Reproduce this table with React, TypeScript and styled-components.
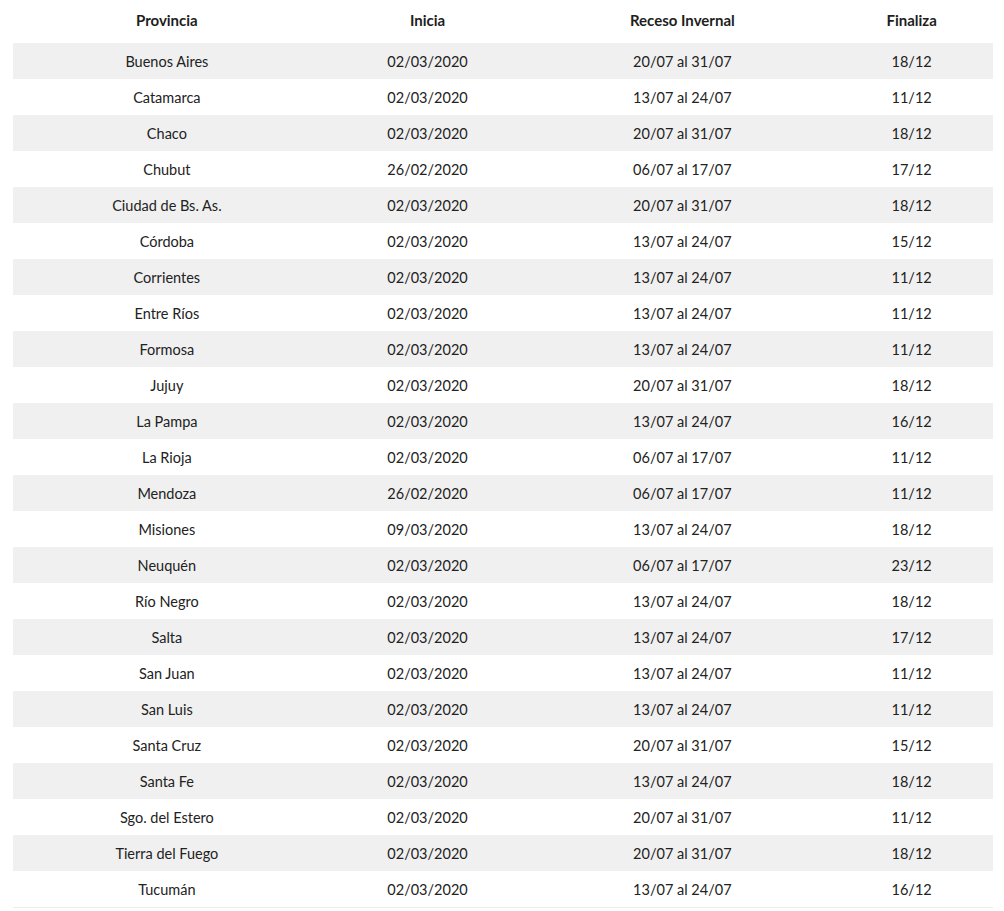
import React from 'react'
import styled, { createGlobalStyle } from 'styled-components'

const GlobalStyle = createGlobalStyle`
  body {
    margin: 0;
    background: #fff;
    font-family: Lato, 'Noto Sans', sans-serif;
    color: #222;
  }
`

const Wrapper = styled.div`
  padding: 0 11px 0 13px;
`

const Table = styled.table`
  width: 100%;
  border-collapse: collapse;
  table-layout: fixed;
  border-bottom: 1px solid #ececec;
`

const HeadCell = styled.th<{ $w: string }>`
  width: ${({ $w }) => $w};
  height: 39px;
  padding: 0 0 4px;
  font-size: 15px;
  font-weight: 700;
  text-align: center;
  vertical-align: middle;
  color: #1e1e1e;
`

const Row = styled.tr<{ $striped: boolean }>`
  background: ${({ $striped }) => ($striped ? '#f0f0f0' : '#fff')};
`

const Cell = styled.td`
  height: 36px;
  padding: 0;
  font-size: 14.5px;
  text-align: center;
  vertical-align: middle;
  color: #222;
`

const rows: [string, string, string, string][] = [
  ['Buenos Aires', '02/03/2020', '20/07 al 31/07', '18/12'],
  ['Catamarca', '02/03/2020', '13/07 al 24/07', '11/12'],
  ['Chaco', '02/03/2020', '20/07 al 31/07', '18/12'],
  ['Chubut', '26/02/2020', '06/07 al 17/07', '17/12'],
  ['Ciudad de Bs. As.', '02/03/2020', '20/07 al 31/07', '18/12'],
  ['Córdoba', '02/03/2020', '13/07 al 24/07', '15/12'],
  ['Corrientes', '02/03/2020', '13/07 al 24/07', '11/12'],
  ['Entre Ríos', '02/03/2020', '13/07 al 24/07', '11/12'],
  ['Formosa', '02/03/2020', '13/07 al 24/07', '11/12'],
  ['Jujuy', '02/03/2020', '20/07 al 31/07', '18/12'],
  ['La Pampa', '02/03/2020', '13/07 al 24/07', '16/12'],
  ['La Rioja', '02/03/2020', '06/07 al 17/07', '11/12'],
  ['Mendoza', '26/02/2020', '06/07 al 17/07', '11/12'],
  ['Misiones', '09/03/2020', '13/07 al 24/07', '18/12'],
  ['Neuquén', '02/03/2020', '06/07 al 17/07', '23/12'],
  ['Río Negro', '02/03/2020', '13/07 al 24/07', '18/12'],
  ['Salta', '02/03/2020', '13/07 al 24/07', '17/12'],
  ['San Juan', '02/03/2020', '13/07 al 24/07', '11/12'],
  ['San Luis', '02/03/2020', '13/07 al 24/07', '11/12'],
  ['Santa Cruz', '02/03/2020', '20/07 al 31/07', '15/12'],
  ['Santa Fe', '02/03/2020', '13/07 al 24/07', '18/12'],
  ['Sgo. del Estero', '02/03/2020', '20/07 al 31/07', '11/12'],
  ['Tierra del Fuego', '02/03/2020', '20/07 al 31/07', '18/12'],
  ['Tucumán', '02/03/2020', '13/07 al 24/07', '16/12'],
]

export default function App() {
  return (
    <Wrapper>
      <GlobalStyle />
      <Table>
        <thead>
          <tr>
            <HeadCell $w="31.4%">Provincia</HeadCell>
            <HeadCell $w="21.8%">Inicia</HeadCell>
            <HeadCell $w="30.2%">Receso Invernal</HeadCell>
            <HeadCell $w="16.6%">Finaliza</HeadCell>
          </tr>
        </thead>
        <tbody>
          {rows.map((r, i) => (
            <Row key={r[0]} $striped={i % 2 === 0}>
              {r.map((c, j) => (
                <Cell key={j}>{c}</Cell>
              ))}
            </Row>
          ))}
        </tbody>
      </Table>
    </Wrapper>
  )
}
